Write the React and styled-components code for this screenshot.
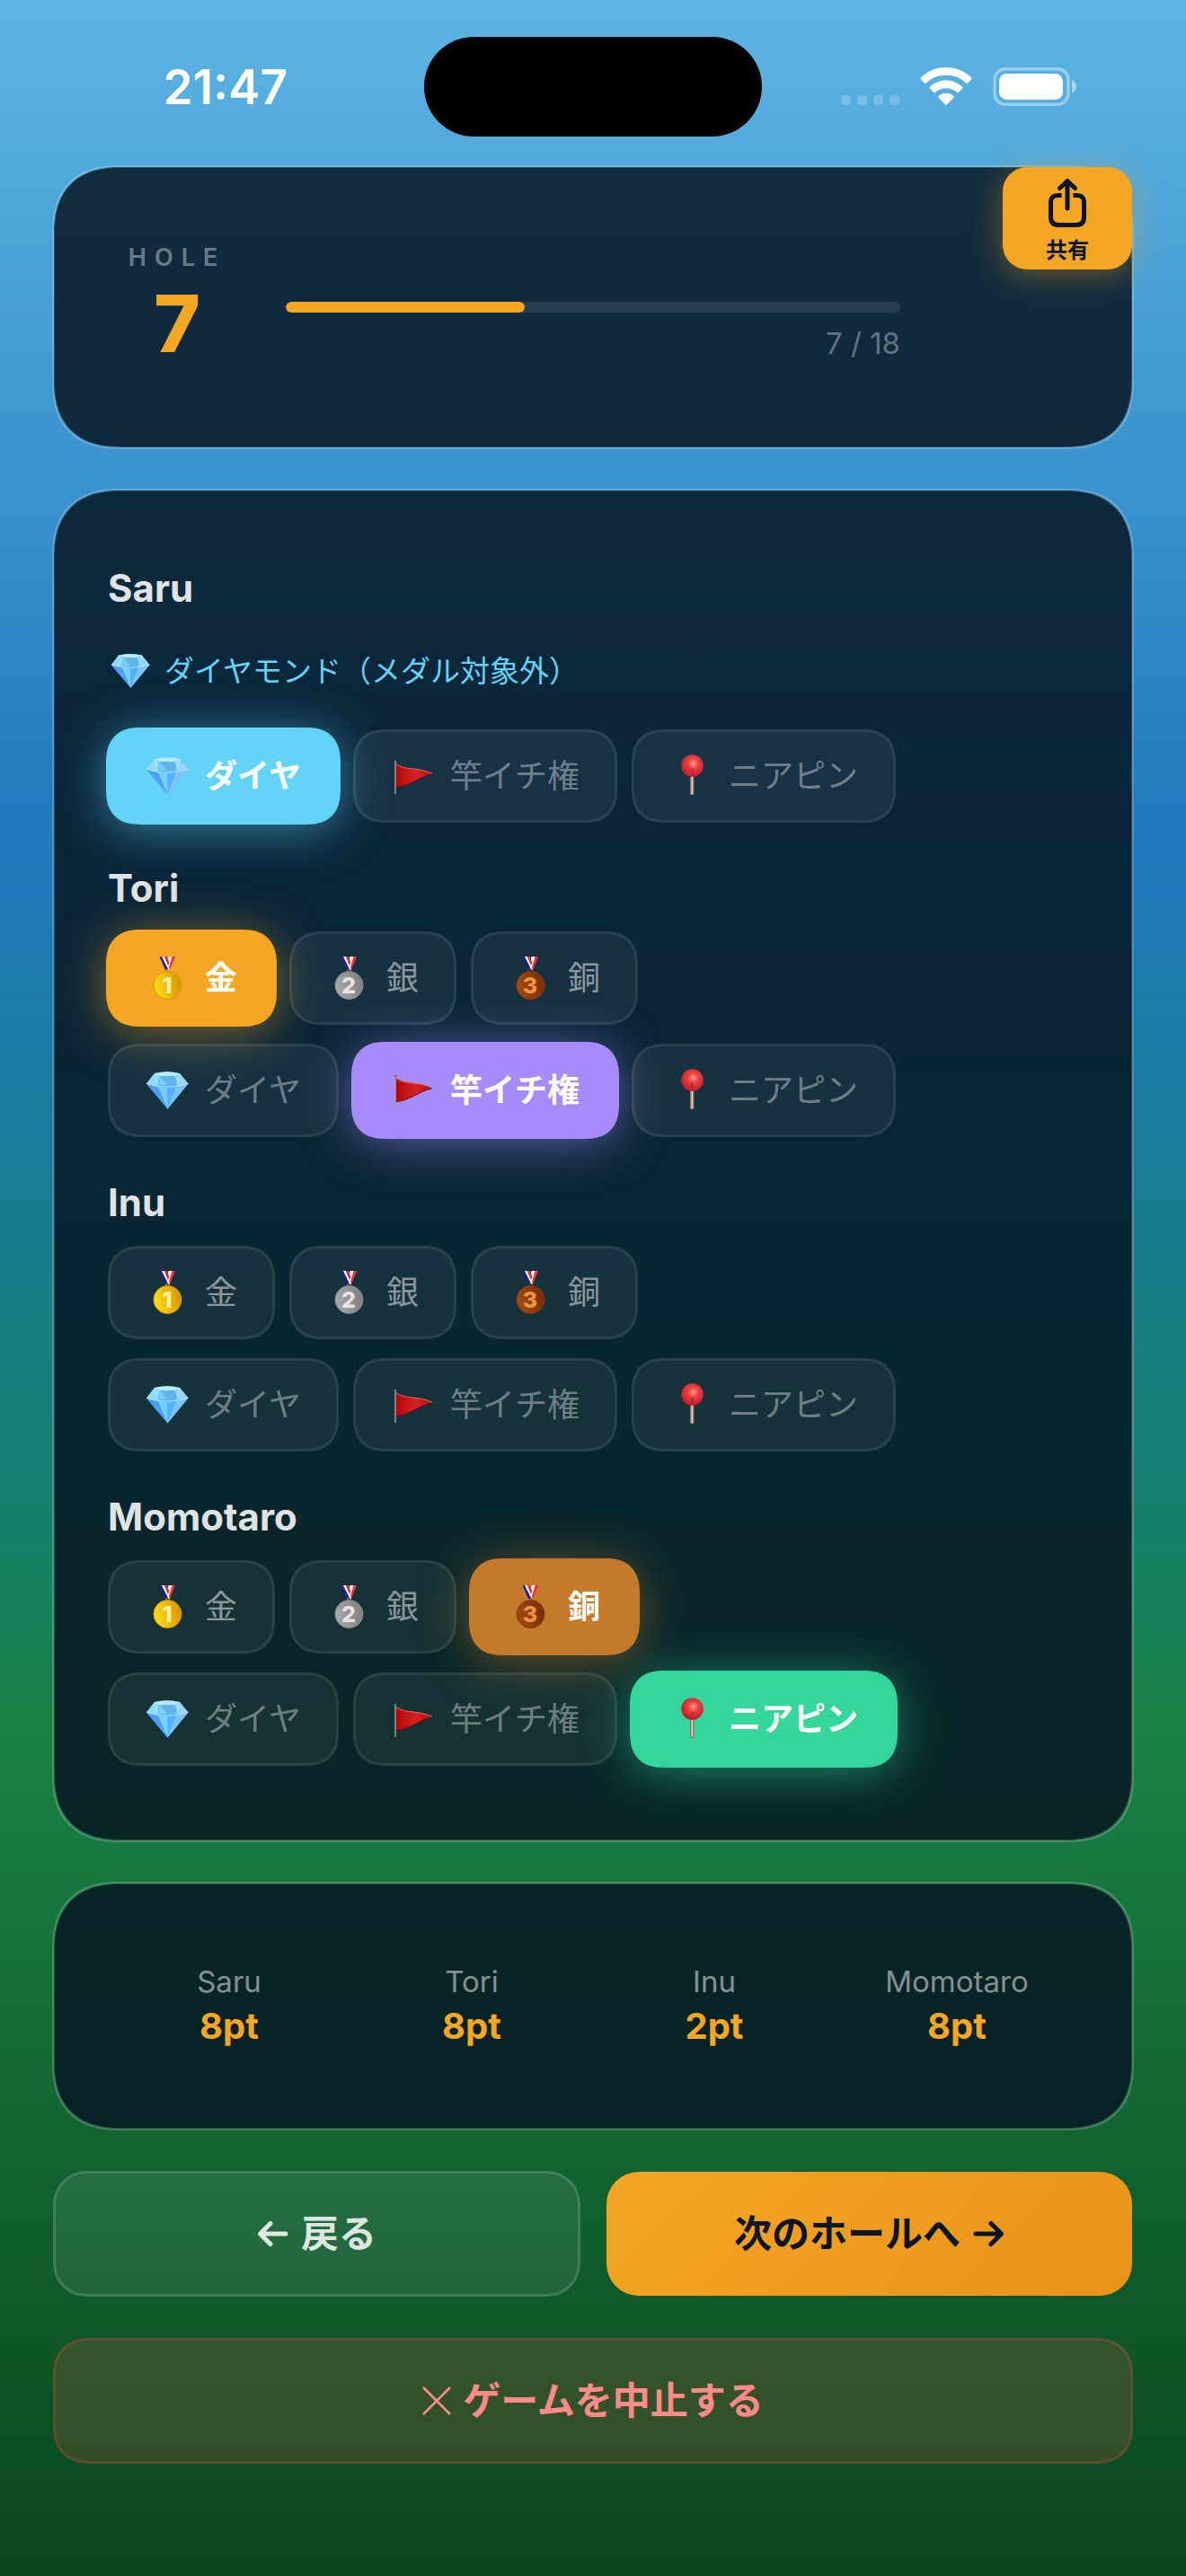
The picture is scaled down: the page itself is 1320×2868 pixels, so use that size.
import React, {useState, useId} from "react";
import styled, {createGlobalStyle, css} from 'styled-components'

const GlobalStyle = createGlobalStyle`
    * {
        box-sizing: border-box;
    }
    body {
        margin: 0;
        background: #0a471e;
        font-family: Inter, "Noto Sans CJK JP", sans-serif;
    }
    button {
        font-family: inherit;
        cursor: pointer;
    }
`
const Screen = styled.div`
    min-height: 100vh;
    padding-bottom: 60px;
    background: linear-gradient(180deg, #5cb5e3 0%, #2078bd 33%, #187e98 45%, #14806a 59%, #1a8245 67%, #0a461e 100%);
`
const StatusBar = styled.header`
    display: grid;
    grid-template-columns: 1fr 376px 1fr;
    align-items: center;
    height: 186px;
    padding: 41px 0 34px;
`
const Clock = styled.time`
    justify-self: end;
    padding-right: 152px;
    color: #fff;
    font-size: 53px;
    line-height: 60px;
    font-weight: 600;
`
const Island = styled.div`
    height: 111px;
    border-radius: 56px;
    background: #000;
`
const StatusIcons = styled.div`
    display: flex;
    justify-content: flex-end;
    align-items: flex-end;
    gap: 23px;
    padding-right: 121px;
`
const Main = styled.main`
    display: flex;
    flex-direction: column;
    gap: 48px;
    padding: 0 60px;
`
const Card = styled.section`
    position: relative;
    border-radius: 64px;
    background: rgba(6, 22, 34, 0.85);
    box-shadow: 0 0 0 2px rgba(255, 255, 255, 0.2), inset 0 0 0 1px rgba(255, 255, 255, 0.15);
    @supports (corner-shape: squircle) {
        border-radius: 76px;
        corner-shape: superellipse(1.3);
    }
`
const HoleCard = styled(Card)`
    display: flex;
    align-items: flex-start;
    gap: 65px;
    padding: 84px 258px 84px 81px;
`
const Hole = styled.div`
    display: flex;
    flex-direction: column;
    align-items: center;
    gap: 3px;
    width: 112px;
`
const HoleLabel = styled.span`
    color: rgba(255, 255, 255, 0.4);
    font-size: 27px;
    line-height: 33px;
    font-weight: 600;
    letter-spacing: 9px;
`
const HoleNumber = styled.strong`
    color: #f5a623;
    font-size: 88px;
    line-height: 108px;
    font-weight: 800;
`
const Progress = styled.div`
    flex: 1;
    display: flex;
    flex-direction: column;
    gap: 14px;
    margin-top: 66px;
`
const Track = styled.div`
    height: 12px;
    border-radius: 6px;
    background: #2a3e53;
    overflow: hidden;
`
const Fill = styled.div`
    height: 100%;
    border-radius: 6px;
    background: #f5a623;
`
const ProgressText = styled.span`
    align-self: flex-end;
    color: rgba(255, 255, 255, 0.35);
    font-size: 33px;
    line-height: 40px;
`
const ShareButton = styled.button`
    position: absolute;
    top: 0;
    right: 0;
    display: flex;
    flex-direction: column;
    align-items: center;
    gap: 10px;
    width: 144px;
    height: 114px;
    padding: 12px 0 0;
    border: 0;
    border-radius: 27px;
    background: #f5a623;
    box-shadow: 0 6px 36px rgba(245, 166, 35, 0.4);
    color: #0a1628;
    font-size: 24px;
    line-height: 30px;
    font-weight: 700;
`
const PlayersCard = styled(Card)`
    display: flex;
    flex-direction: column;
    gap: 46px;
    padding: 82px 60px 83px;
`
const Player = styled.div`
    display: flex;
    flex-direction: column;
    gap: 21px;
`
const PlayerName = styled.h2`
    margin: 0;
    color: rgba(255, 255, 255, 0.9);
    font-size: 42px;
    line-height: 54px;
    font-weight: 700;
`
const Note = styled.p`
    display: flex;
    align-items: center;
    gap: 16px;
    margin: 0;
    padding: 22px 3px;
    color: #63d4f8;
    font-size: 33px;
    line-height: 43px;
`
const ChipRow = styled.div`
    display: flex;
    flex-wrap: wrap;
    gap: 16px;
`
const Chip = styled.button`
    display: flex;
    align-items: center;
    gap: 18px;
    height: 104px;
    padding: 0 39px;
    border: 3px solid rgba(255, 255, 255, 0.13);
    border-radius: 30px;
    background: rgba(255, 255, 255, 0.06);
    background-clip: padding-box;
    color: rgba(255, 255, 255, ${props => (props.$medal ? 0.5 : 0.4)});
    font-size: 36px;
    line-height: 48px;
    font-weight: 400;
    @supports (corner-shape: squircle) {
        border-radius: 38px;
        corner-shape: superellipse(1.3);
    }
    ${props => props.$on && css`
        border-color: ${props.$color};
        background: ${props.$color};
        color: #fff;
        font-weight: 700;
        box-shadow: 0 0 0 2px ${props.$color}, 0 6px 54px ${props.$color}90;
    `}
`
const ScoreCard = styled(Card)`
    display: grid;
    grid-template-columns: repeat(4, 1fr);
    padding: 85px 60px 88px;
`
const Score = styled.div`
    display: flex;
    flex-direction: column;
    align-items: center;
`
const ScoreName = styled.span`
    color: rgba(255, 255, 255, 0.5);
    font-size: 33px;
    line-height: 48px;
`
const ScoreValue = styled.strong`
    color: #f5a623;
    font-size: 40px;
    line-height: 52px;
    font-weight: 700;
`
const Actions = styled.div`
    display: grid;
    grid-template-columns: 1fr 1fr;
    gap: 30px;
`
const ActionButton = styled.button`
    display: flex;
    align-items: center;
    justify-content: center;
    gap: 13px;
    height: 138px;
    padding: 0;
    border: 0;
    border-radius: 36px;
    font-size: 42px;
    line-height: 54px;
    font-weight: 600;
`
const BackButton = styled(ActionButton)`
    background: rgba(255, 255, 255, 0.08);
    box-shadow: 0 0 0 1px rgba(255, 255, 255, 0.2), inset 0 0 0 2px rgba(255, 255, 255, 0.14);
    color: rgba(255, 255, 255, 0.85);
`
const NextButton = styled(ActionButton)`
    background: linear-gradient(135deg, #f5a623, #e8921a);
    color: #0a1628;
`
const CancelButton = styled(ActionButton)`
    background: rgba(255, 80, 60, 0.16);
    box-shadow: 0 0 0 1px rgba(255, 80, 70, 0.3), inset 0 0 0 2px rgba(255, 80, 70, 0.22);
    color: #ff8a8a;
`

const SignalIcon = () => (
    <svg width="65" height="43" viewBox="0 0 65 43" fill="#fff" fillOpacity="0.2" aria-hidden="true">
        {[0, 18, 36, 54].map(x => <rect key={x} x={x} y="31" width="11" height="11" rx="3.5"/>)}
    </svg>
)
const WifiIcon = () => (
    <svg width="58" height="43" viewBox="0 0 58 43" fill="#fff" aria-hidden="true">
        <path d="M29 0C40 0 50 4.300 57 11.200Q58 12.300 57 13.400L53.300 17.200Q52.200 18.300 51 17.200C45 11.600 37.400 8.800 29 8.800S13 11.600 7 17.200Q5.800 18.300 4.700 17.200L1 13.400Q0 12.300 1 11.200C8 4.300 18 0 29 0Z"/>
        <path d="M29 14.500C36 14.500 42.300 17.200 47 21.600Q48.100 22.700 47 23.800L43 27.800Q42 28.800 40.800 27.800C37.600 24.900 33.500 23.300 29 23.300S20.400 24.900 17.200 27.800Q16 28.800 15 27.800L11 23.800Q9.900 22.700 11 21.600C15.700 17.200 22 14.500 29 14.500Z"/>
        <path d="M29 28.800C32.200 28.800 35 30 37.200 31.800Q38.200 32.800 37.200 33.900L30 41.300Q29 42.300 28 41.300L20.800 33.900Q19.800 32.800 20.800 31.800C23 30 25.800 28.800 29 28.800Z"/>
    </svg>
)
const BatteryIcon = () => (
    <svg width="94" height="43" viewBox="0 0 94 43" fill="none" aria-hidden="true">
        <rect x="2" y="1.700" width="82" height="39.600" rx="12" stroke="#fff" strokeOpacity="0.4" strokeWidth="3.400"/>
        <rect x="7" y="7" width="71" height="29" rx="8.500" fill="#fff"/>
        <path d="M88 14.500C91 15.600 93 18 93 21.500S91 27.400 88 28.500Z" fill="#fff" fillOpacity="0.5"/>
    </svg>
)
const ShareIcon = () => (
    <svg width="44" height="56" viewBox="0 0 44 56" fill="none" stroke="#0a1628" strokeWidth="5" aria-hidden="true">
        <path d="M15.500 19.500H12C6 19.500 3.500 22 3.500 28V43.500C3.500 49.500 6 52.500 12 52.500H32C38 52.500 40.500 49.500 40.500 43.500V28C40.500 22 38 19.500 32 19.500H28.500"/>
        <path d="M22 34V4M13.500 11.500L22 3.500L30.500 11.500" strokeLinecap="round" strokeLinejoin="round"/>
    </svg>
)
const ArrowIcon = ({back}) => (
    <svg width="36" height="48" viewBox="0 0 36 48" fill="none" stroke="currentColor" strokeWidth="5"
         strokeLinecap="round" strokeLinejoin="round" aria-hidden="true">
        {back ? <path d="M32 24H4M15 12.500L3.500 24L15 35.500"/> : <path d="M4 24H32M21 12.500L32.500 24L21 35.500"/>}
    </svg>
)
const CrossIcon = () => (
    <svg width="32" height="32" viewBox="0 0 32 32" stroke="currentColor" strokeWidth="2.600" aria-hidden="true">
        <path d="M1 1L31 31M31 1L1 31"/>
    </svg>
)

const MEDALS = {
    gold: {digit: '1', from: '#ffdf1a', to: '#d79500', edge: '#d99a00', ink: '#fff0a0'},
    silver: {digit: '2', from: '#a9a9a9', to: '#7f7f7f', edge: '#8a8a8a', ink: '#e4e4e4'},
    bronze: {digit: '3', from: '#a34c10', to: '#792c04', edge: '#8b3c0c', ink: '#ee9440'},
}
const MedalIcon = ({kind}) => {
    const id = useId()
    const medal = MEDALS[kind]
    return (
        <svg width="48" height="48" viewBox="0 0 48 48" aria-hidden="true">
            <defs>
                <linearGradient id={id} x1="0" y1="0.600" x2="1" y2="0.400">
                    <stop offset="0" stopColor={medal.from}/>
                    <stop offset="1" stopColor={medal.to}/>
                </linearGradient>
            </defs>
            <path d="M28.500 0H33L27 15H23.500Z" fill="#f0323c"/>
            <path d="M25.500 0H29.500L25.500 14L23.500 12Z" fill="#fff"/>
            <path d="M15.500 0H19L26 15H22Z" fill="#1c2292"/>
            <path d="M18 0H21L27 14.500L25.500 15Z" fill="#fff"/>
            <path d="M21 0H24L26.500 7L25 10Z" fill="#e5303c"/>
            <circle cx="24.500" cy="16" r="1.800" fill="none" stroke={medal.edge} strokeWidth="1"/>
            <circle cx="24.500" cy="32" r="15.500" fill={`url(#${id})`} stroke={medal.edge} strokeWidth="1"/>
            <text x="24" y="41" textAnchor="middle" fontFamily="Inter" fontSize="25" fontWeight="800" fill={medal.ink}>{medal.digit}</text>
        </svg>
    )
}
const DiamondIcon = ({size = 48}) => (
    <svg width={size} height={size} viewBox="0 0 48 48" aria-hidden="true">
        <path d="M10 5Q24 1.500 38 5L47.500 16.500L24.500 44.500L1 16.500Z" fill="#5cb8fb"/>
        <path d="M10 5L1 16.500L12 20L16 7Z" fill="#8fdcff"/>
        <path d="M38 5L47.500 16.500L37 20L32 7Z" fill="#9ad4fb"/>
        <path d="M10 5Q24 1.500 38 5L32 8H16Z" fill="#b5ecff"/>
        <path d="M16 8H32L34 18H14Z" fill="#62b3ec"/>
        <path d="M16 8L24 18H14Z" fill="#7ccdf8"/>
        <path d="M1 16.500L14 20L24.500 44.500Z" fill="#4d9ff5"/>
        <path d="M14 20Q24 22 34 20L24.500 44.500Z" fill="#74d0ff"/>
        <path d="M24 21L34 20L24.500 44.500Z" fill="#52b2fb"/>
        <path d="M47.500 16.500L34 20L24.500 44.500Z" fill="#7cc4fb"/>
        <path d="M1 16.500Q24 24 47.500 16.500M10 5L14 20M38 5L34 20" fill="none" stroke="#c4f0ff" strokeWidth="0.700"/>
    </svg>
)
const FlagIcon = () => {
    const id = useId()
    return (
        <svg width="48" height="48" viewBox="0 0 48 48" aria-hidden="true">
            <defs>
                <linearGradient id={id}>
                    <stop offset="0" stopColor="#b00808"/>
                    <stop offset="0.550" stopColor="#d62222"/>
                    <stop offset="1" stopColor="#a81010"/>
                </linearGradient>
            </defs>
            <path d="M5.500 10C17 18 30 13 46.500 21.500C30 25 20 36 5.500 36.500Z" fill={`url(#${id})`}/>
            <path d="M5.500 10.500C17 18.500 30 13.500 46 21.300" fill="none" stroke="#e0706c" strokeWidth="0.900"/>
            <path d="M46 21.800C30 25.500 20 36 5.500 36.500" fill="none" stroke="#720606" strokeWidth="0.900"/>
            <path d="M5 8V44" stroke="#97a0a3" strokeWidth="1.500"/>
            <circle cx="5" cy="8" r="1.500" fill="#6c767a"/>
        </svg>
    )
}
const PinIcon = () => {
    const id = useId()
    return (
        <svg width="48" height="48" viewBox="0 0 48 48" aria-hidden="true">
            <defs>
                <radialGradient id={id} cx="0.550" cy="0.400" r="0.600">
                    <stop offset="0" stopColor="#ffa08c"/>
                    <stop offset="0.350" stopColor="#ee4444"/>
                    <stop offset="1" stopColor="#bf1c28"/>
                </radialGradient>
            </defs>
            <rect x="23" y="22" width="4.500" height="23" rx="1" fill="#8d7468"/>
            <rect x="24.500" y="22" width="1.600" height="22" fill="#e8d2c4"/>
            <circle cx="25.500" cy="12.500" r="12.300" fill={`url(#${id})`}/>
            <path d="M23.500 17Q25.500 14 27.500 17L26.500 24H24.500Z" fill="#b01f34" fillOpacity="0.600"/>
        </svg>
    )
}

const MEDAL_CHIPS = [
    {key: 'gold', label: '金', color: '#f5a623', icon: <MedalIcon kind="gold"/>},
    {key: 'silver', label: '銀', color: '#8e9aa6', icon: <MedalIcon kind="silver"/>},
    {key: 'bronze', label: '銅', color: '#c47a2b', icon: <MedalIcon kind="bronze"/>},
]
const BONUS_CHIPS = [
    {key: 'diamond', label: 'ダイヤ', color: '#63d4f8', icon: <DiamondIcon/>},
    {key: 'flag', label: '竿イチ権', color: '#a78bfa', icon: <FlagIcon/>},
    {key: 'pin', label: 'ニアピン', color: '#34d69b', icon: <PinIcon/>},
]
const PLAYERS = [
    {name: 'Saru', points: 8, picks: ['diamond']},
    {name: 'Tori', points: 8, picks: ['gold', 'flag']},
    {name: 'Inu', points: 2, picks: []},
    {name: 'Momotaro', points: 8, picks: ['bronze', 'pin']},
]

const Chips = ({items, picks, medal, onToggle}) => (
    <ChipRow>
        {items.map(item => (
            <Chip key={item.key} type="button" $medal={medal} $color={item.color} $on={picks.includes(item.key)}
                  aria-pressed={picks.includes(item.key)} onClick={() => onToggle(item.key)}>
                {item.icon}
                <span>{item.label}</span>
            </Chip>
        ))}
    </ChipRow>
)

const App = () => {
    const hole = 7
    const total = 18
    const [players, setPlayers] = useState(PLAYERS)

    const toggle = (name, key) => {
        setPlayers(players.map(player => {
            if (player.name !== name) return player
            const picks = player.picks.includes(key) ? player.picks.filter(p => p !== key) : [...player.picks, key]
            return {...player, picks}
        }))
    }

    return (
        <Screen>
            <GlobalStyle/>
            <StatusBar>
                <Clock>21:47</Clock>
                <Island/>
                <StatusIcons>
                    <SignalIcon/>
                    <WifiIcon/>
                    <BatteryIcon/>
                </StatusIcons>
            </StatusBar>
            <Main>
                <HoleCard>
                    <Hole>
                        <HoleLabel>HOLE</HoleLabel>
                        <HoleNumber>{hole}</HoleNumber>
                    </Hole>
                    <Progress>
                        <Track>
                            <Fill style={{width: `${hole / total * 100}%`}}/>
                        </Track>
                        <ProgressText>{hole} / {total}</ProgressText>
                    </Progress>
                    <ShareButton type="button">
                        <ShareIcon/>
                        共有
                    </ShareButton>
                </HoleCard>
                <PlayersCard>
                    {players.map(player => {
                        const diamond = player.picks.includes('diamond')
                        return (
                            <Player key={player.name}>
                                <PlayerName>{player.name}</PlayerName>
                                {/* a diamond takes the player out of the medals */}
                                {diamond
                                    ? <Note><DiamondIcon size={44}/>ダイヤモンド（メダル対象外）</Note>
                                    : <Chips items={MEDAL_CHIPS} picks={player.picks} medal onToggle={key => toggle(player.name, key)}/>}
                                <Chips items={BONUS_CHIPS} picks={player.picks} onToggle={key => toggle(player.name, key)}/>
                            </Player>
                        )
                    })}
                </PlayersCard>
                <ScoreCard>
                    {players.map(player => (
                        <Score key={player.name}>
                            <ScoreName>{player.name}</ScoreName>
                            <ScoreValue>{player.points}pt</ScoreValue>
                        </Score>
                    ))}
                </ScoreCard>
                <Actions>
                    <BackButton type="button"><ArrowIcon back/>戻る</BackButton>
                    <NextButton type="button">次のホールへ<ArrowIcon/></NextButton>
                </Actions>
                <CancelButton type="button"><CrossIcon/>ゲームを中止する</CancelButton>
            </Main>
        </Screen>
    )
}
export default App
